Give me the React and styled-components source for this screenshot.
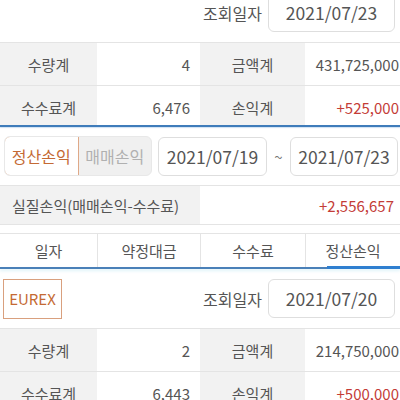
import React from 'react';
import styled, { createGlobalStyle } from 'styled-components';

const GlobalStyle = createGlobalStyle`
  html, body {
    margin: 0;
    padding: 0;
    background: #ffffff;
    overflow: hidden;
  }
  body {
    font-family: "Noto Sans CJK KR", "Noto Sans", sans-serif;
    color: #555555;
  }
`;

const orange = '#c46a34';
const red = '#c43c37';
const line = '#e4e4e4';
const cellGray = '#f2f2f2';

const Page = styled.div`
  width: 400px;
  margin-top: -17px;
`;

const DateBar = styled.div`
  height: 60px;
  display: flex;
  align-items: center;
  justify-content: flex-end;
  padding: 0 5px 0 3px;
  border-bottom: 1px solid ${line};
  box-sizing: border-box;
`;

const Label = styled.span`
  font-size: 16px;
  color: #555;
  margin-right: 6px;
`;

const DateBox = styled.div`
  width: ${p => p.$w || 127}px;
  height: 39px;
  box-sizing: border-box;
  border: 1px solid #dedede;
  border-radius: 6px;
  display: flex;
  align-items: center;
  justify-content: center;
  font-size: 17.5px;
  color: #555;
  background: #fff;
`;

const Market = styled.div`
  margin-right: auto;
  width: 59px;
  height: 40px;
  box-sizing: border-box;
  border: 1px solid #d9a07e;
  display: flex;
  align-items: center;
  justify-content: center;
  color: ${orange};
  font-size: 15px;
`;

const Grid = styled.div`
  display: grid;
  grid-template-columns: 97px 103px 105px 1fr;
`;

const Cell = styled.div`
  height: ${p => p.$h || 42}px;
  box-sizing: content-box;
  border-bottom: 1px solid ${line};
  display: flex;
  align-items: center;
  justify-content: ${p => (p.$label ? 'center' : 'flex-end')};
  padding-right: ${p => (p.$label ? 0 : p.$pr ?? 10)}px;
  background: ${p => (p.$label ? cellGray : '#fff')};
  color: ${p => (p.$red ? red : '#555')};
  font-size: 15px;
`;

const BlueRule = styled.div`
  height: 2px;
  background: #3f7cba;
  box-shadow: 0 1px 1px rgba(120, 170, 220, 0.35);
`;

const FilterBar = styled.div`
  height: 59px;
  display: flex;
  align-items: center;
  padding: 0 2px 0 4px;
  border-bottom: 1px solid ${line};
  box-sizing: border-box;
`;

const Toggle = styled.div`
  display: flex;
  width: 148px;
  height: 40px;
  margin-right: 6px;
  border-radius: 6px;
  overflow: hidden;
  background: #f0f0f0;
  border: 1px solid #e8e8e8;
  box-sizing: border-box;
`;

const ToggleItem = styled.div`
  flex: 1;
  display: flex;
  align-items: center;
  justify-content: center;
  font-size: 16px;
  color: ${p => (p.$active ? orange : '#b0b0b0')};
  background: ${p => (p.$active ? '#fff' : 'transparent')};
  border: ${p => (p.$active ? '1px solid #dfa988' : 'none')};
  border-radius: ${p => (p.$active ? '6px 0 0 6px' : '0')};
  margin: ${p => (p.$active ? '-1px 0 -1px -1px' : '0')};
`;

const Tilde = styled.span`
  width: 23px;
  text-align: center;
  font-size: 15px;
  color: #777;
`;

const RealRow = styled.div`
  display: grid;
  grid-template-columns: 200px 1fr;
  height: 38px;
  border-bottom: 1px solid ${line};
`;

const RealLabel = styled.div`
  background: ${cellGray};
  display: flex;
  align-items: center;
  padding-left: 12px;
  font-size: 15px;
  color: #555;
`;

const RealValue = styled.div`
  display: flex;
  align-items: center;
  justify-content: flex-end;
  padding-right: 6px;
  font-size: 15px;
  color: ${red};
`;

const Spacer = styled.div`
  height: 8px;
  border-bottom: 1px solid ${line};
`;

const Header = styled.div`
  display: grid;
  grid-template-columns: 97px 103px 105px 1fr;
  height: 33px;
`;

const HeadCell = styled.div`
  display: flex;
  align-items: center;
  justify-content: center;
  font-size: 15px;
  color: #555;
  border-left: ${p => (p.$first ? 'none' : `1px solid ${line}`)};
`;

const TabRule = styled.div`
  position: relative;
  height: 2px;
  background: #4a80b8;
  box-shadow: 0 2px 3px rgba(150, 215, 235, 0.35);
`;

const TabIndicator = styled.div`
  position: absolute;
  left: 327px;
  right: 0;
  top: -1px;
  height: 3px;
  background: #2f7fd0;
`;

const ClipRow = styled.div`
  height: ${p => p.$h}px;
  overflow: hidden;
`;

const Summary = ({ market, date, rows, clip }) => {
  const grid = (
    <Grid>
      {rows.map((r, i) => (
        <React.Fragment key={i}>
          <Cell $label>{r[0]}</Cell>
          <Cell>{r[1]}</Cell>
          <Cell $label>{r[2]}</Cell>
          <Cell $pr={1} $red={r[3].startsWith('+')}>{r[3]}</Cell>
        </React.Fragment>
      ))}
    </Grid>
  );
  return (
    <>
      <DateBar>
        {market && <Market>{market}</Market>}
        <Label>조회일자</Label>
        <DateBox>{date}</DateBox>
      </DateBar>
      {clip ? <ClipRow $h={clip}>{grid}</ClipRow> : grid}
    </>
  );
};

export default function App() {
  return (
    <Page>
      <GlobalStyle />
      <Summary
        date="2021/07/23"
        rows={[
          ['수량계', '4', '금액계', '431,725,000'],
          ['수수료계', '6,476', '손익계', '+525,000'],
        ]}
        clip={82}
      />
      <BlueRule />
      <FilterBar>
        <Toggle>
          <ToggleItem $active>정산손익</ToggleItem>
          <ToggleItem>매매손익</ToggleItem>
        </Toggle>
        <DateBox $w={109}>2021/07/19</DateBox>
        <Tilde>~</Tilde>
        <DateBox $w={108}>2021/07/23</DateBox>
      </FilterBar>
      <RealRow>
        <RealLabel>실질손익(매매손익-수수료)</RealLabel>
        <RealValue>+2,556,657</RealValue>
      </RealRow>
      <Spacer />
      <Header>
        <HeadCell $first>일자</HeadCell>
        <HeadCell>약정대금</HeadCell>
        <HeadCell>수수료</HeadCell>
        <HeadCell>정산손익</HeadCell>
      </Header>
      <TabRule>
        <TabIndicator />
      </TabRule>
      <Summary
        market="EUREX"
        date="2021/07/20"
        rows={[
          ['수량계', '2', '금액계', '214,750,000'],
          ['수수료계', '6,443', '손익계', '+500,000'],
        ]}
      />
    </Page>
  );
}
